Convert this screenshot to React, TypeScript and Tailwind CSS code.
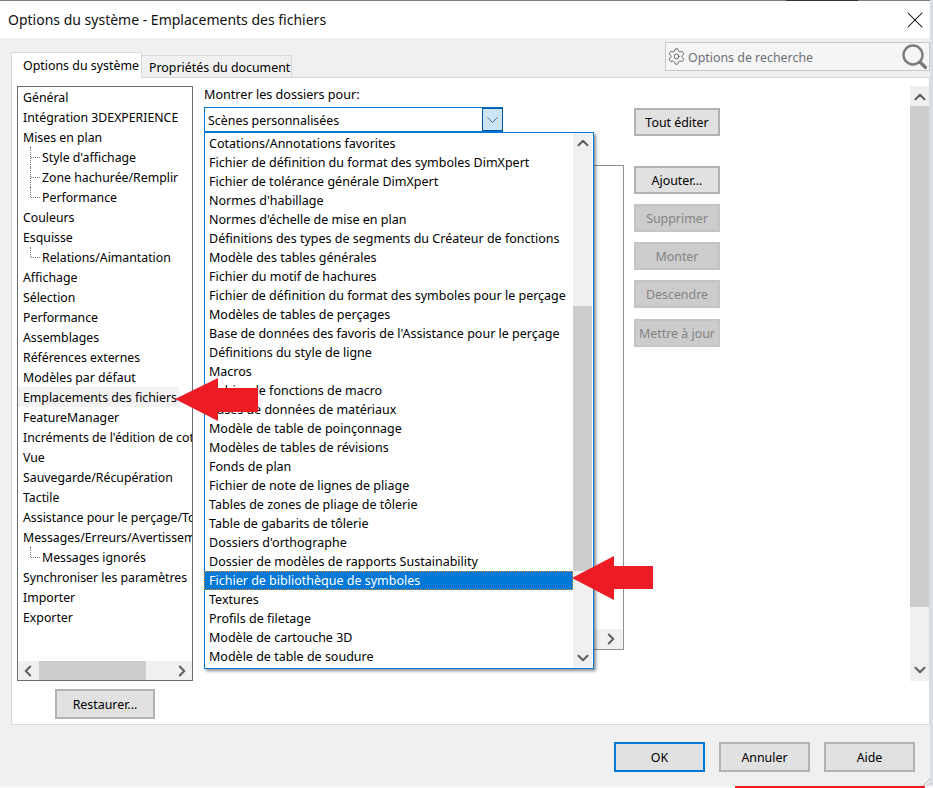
import { ChevronUp, ChevronDown, ChevronLeft, ChevronRight, Settings, X } from 'lucide-react'
import type { ReactNode } from 'react'

const treeItems: { label: string; child?: boolean; last?: boolean; selected?: boolean }[] = [
  { label: 'Général' },
  { label: 'Intégration 3DEXPERIENCE' },
  { label: 'Mises en plan' },
  { label: "Style d'affichage", child: true },
  { label: 'Zone hachurée/Remplir', child: true },
  { label: 'Performance', child: true, last: true },
  { label: 'Couleurs' },
  { label: 'Esquisse' },
  { label: 'Relations/Aimantation', child: true, last: true },
  { label: 'Affichage' },
  { label: 'Sélection' },
  { label: 'Performance' },
  { label: 'Assemblages' },
  { label: 'Références externes' },
  { label: 'Modèles par défaut' },
  { label: 'Emplacements des fichiers', selected: true },
  { label: 'FeatureManager' },
  { label: "Incréments de l'édition de cotes" },
  { label: 'Vue' },
  { label: 'Sauvegarde/Récupération' },
  { label: 'Tactile' },
  { label: 'Assistance pour le perçage/Toolbox' },
  { label: 'Messages/Erreurs/Avertissements' },
  { label: 'Messages ignorés', child: true, last: true },
  { label: 'Synchroniser les paramètres' },
  { label: 'Importer' },
  { label: 'Exporter' },
]

const menuItems = [
  'Cotations/Annotations favorites',
  'Fichier de définition du format des symboles DimXpert',
  'Fichier de tolérance générale DimXpert',
  "Normes d'habillage",
  "Normes d'échelle de mise en plan",
  'Définitions des types de segments du Créateur de fonctions',
  'Modèle des tables générales',
  'Fichier du motif de hachures',
  'Fichier de définition du format des symboles pour le perçage',
  'Modèles de tables de perçages',
  "Base de données des favoris de l'Assistance pour le perçage",
  'Définitions du style de ligne',
  'Macros',
  'Fichier de fonctions de macro',
  'Bases de données de matériaux',
  'Modèle de table de poinçonnage',
  'Modèles de tables de révisions',
  'Fonds de plan',
  'Fichier de note de lignes de pliage',
  'Tables de zones de pliage de tôlerie',
  'Table de gabarits de tôlerie',
  "Dossiers d'orthographe",
  'Dossier de modèles de rapports Sustainability',
  'Fichier de bibliothèque de symboles',
  'Textures',
  'Profils de filetage',
  'Modèle de cartouche 3D',
  'Modèle de table de soudure',
]

function DialogButton({ children, disabled, className = '' }: { children: ReactNode; disabled?: boolean; className?: string }) {
  return (
    <div
      className={`flex items-center justify-center border-2 pt-[2px] ${
        disabled ? 'bg-[#cccccc] border-[#c4c4c4] text-[#838383]' : 'bg-[#e1e1e1] border-[#b2b2b2] text-black'
      } ${className}`}
    >
      {children}
    </div>
  )
}

function RedArrow({ className, width, height, points }: { className: string; width: number; height: number; points: string }) {
  return (
    <svg className={`absolute ${className}`} width={width} height={height} viewBox={`0 0 ${width} ${height}`}>
      <polygon points={points} fill="#ed1c24" />
    </svg>
  )
}

function TreeRow({ label, child, last, selected }: { label: string; child?: boolean; last?: boolean; selected?: boolean }) {
  return (
    <div className="relative h-5 flex items-center whitespace-nowrap pt-[2px]">
      {child && (
        <>
          <div className={`absolute left-[12px] top-0 border-l border-dotted border-[#777777] ${last ? 'h-[10px]' : 'h-5'}`} />
          <div className="absolute left-[13px] top-[10px] w-[9px] border-t border-dotted border-[#777777]" />
        </>
      )}
      <span className={`${child ? 'ml-[24px]' : 'ml-[5px]'}`}>{label}</span>
      {selected && <div className="absolute left-0 top-0 h-5 w-[161px] bg-black/5" />}
    </div>
  )
}

export default function App() {
  return (
    <div className="w-[933px] h-[788px] flex flex-col overflow-hidden bg-[#f0f0f0] font-['Noto_Sans',sans-serif] text-[12.4px] text-black relative">
      {/* title bar */}
      <div className="h-[38px] shrink-0 bg-white border-t border-[#808080] mr-[3px] flex items-center justify-between pl-2 pr-px">
        <span className="text-[14px] text-[#111111]">Options du système - Emplacements des fichiers</span>
        <X size={28} strokeWidth={0.9} className="text-black" />
      </div>

      {/* tabs and search */}
      <div className="h-[39px] shrink-0 mr-[3px] flex items-end pl-[11px] relative">
        <div className="h-[26px] w-[131px] bg-white border border-b-0 border-[#d9d9d9] flex items-center pl-[11px] pt-[2px] -mb-px relative z-10">
          Options du système
        </div>
        <div className="h-[22px] w-[150px] bg-[#f0f0f0] border border-l-0 border-b-0 border-[#d9d9d9] flex items-center pl-[7px] pt-[4px]">
          Propriétés du document
        </div>
        <div className="ml-auto self-start mt-[4px] h-[29px] w-[265px] bg-[#f5f5f5] border border-[#c8c8c8] flex items-center pl-px text-[#6e7079]">
          <Settings size={19} strokeWidth={1} className="text-[#444444]" />
          <span className="ml-[2px] pt-[4px]">Options de recherche</span>
          <svg className="ml-auto mr-[2px]" width="25" height="25" viewBox="0 0 25 25" fill="none" stroke="#7b7b7b">
            <circle cx="11" cy="11" r="9.5" strokeWidth="2.4" />
            <path d="M18 18 L23.5 23.5" strokeWidth="3.4" strokeLinecap="round" />
          </svg>
        </div>
      </div>

      {/* main panel */}
      <div className="h-[648px] shrink-0 ml-[11px] mr-[3px] bg-white border border-[#d9d9d9] flex pt-2 pl-[5px] relative">
        {/* left column */}
        <div className="w-[176px] shrink-0 flex flex-col items-center">
          <div className="w-full h-[595px] border border-[#6d6d6d] flex flex-col overflow-hidden text-[12.3px]">
            <div className="h-[574px] overflow-hidden">
              {treeItems.map((item) => (
                <TreeRow key={item.label + (item.child ? 'c' : '')} {...item} />
              ))}
            </div>
            <div className="h-[19px] shrink-0 bg-[#f0f0f0] flex items-center justify-between relative">
              <ChevronLeft size={18} strokeWidth={2.8} className="ml-px text-[#606060]" />
              <div className="absolute left-[21px] top-0 h-[19px] w-[107px] bg-[#cdcdcd]" />
              <ChevronRight size={18} strokeWidth={2.8} className="mr-px text-[#606060]" />
            </div>
          </div>
          <DialogButton className="mt-2 w-[100px] h-[30px]">Restaurer...</DialogButton>
        </div>

        {/* folder column */}
        <div className="ml-[11px] w-[420px] shrink-0 relative">
          <div className="h-[19px] flex items-center text-[12.6px]">Montrer les dossiers pour:</div>
          <div className="mt-[2px] w-[299px] h-[25px] border border-[#0078d7] flex items-center">
            <span className="pl-[3px] pt-[4px]">Scènes personnalisées</span>
            <div className="ml-auto w-[21px] h-full bg-[#cce4f7] border border-[#005499] -mr-px flex items-center justify-center">
              <ChevronDown size={20} strokeWidth={0.8} className="text-[#222222]" />
            </div>
          </div>
          <div className="mt-[33px] h-[485px] border border-[#8f8f9d] flex flex-col justify-end items-end">
            <div className="h-[20px] w-[30px] bg-[#f0f0f0] flex items-center justify-end">
              <ChevronRight size={18} strokeWidth={2.8} className="mr-[3px] text-[#606060]" />
            </div>
          </div>

          {/* open dropdown */}
          <div className="absolute left-0 top-[46px] w-[390px] h-[537px] bg-white border border-[#0078d7] shadow-[2px_2px_3px_rgba(0,0,0,0.45)] flex text-[12.5px]">
            <div className="flex-1 pt-[1px] min-w-0">
              {menuItems.map((item, i) =>
                i === 23 ? (
                  <div key={item} className="h-[19px] flex items-center pl-[3px] pt-[2px] -ml-px bg-[#0078d7] text-white border border-dotted border-[#e08a2c]">
                    <span className="ml-px">{item}</span>
                  </div>
                ) : (
                  <div key={item} className="h-[19px] flex items-center pl-1 pt-[2px] whitespace-nowrap">
                    {item}
                  </div>
                ),
              )}
            </div>
            <div className="w-[19px] mr-px shrink-0 bg-[#f0f0f0] flex flex-col items-center justify-between relative">
              <ChevronUp size={18} strokeWidth={2.8} className="mt-px text-[#606060] relative z-10" />
              <div className="absolute left-0 top-[173px] w-[19px] h-[265px] bg-[#cdcdcd]" />
              <ChevronDown size={18} strokeWidth={2.8} className="mb-px text-[#606060]" />
            </div>
          </div>
        </div>

        {/* action buttons */}
        <div className="ml-[10px] w-[86px] shrink-0 flex flex-col">
          <DialogButton className="mt-[22px] h-[28px]">Tout éditer</DialogButton>
          <DialogButton className="mt-[30px] h-[28px]">Ajouter...</DialogButton>
          <DialogButton disabled className="mt-[10px] h-[28px]">Supprimer</DialogButton>
          <DialogButton disabled className="mt-[10px] h-[28px]">Monter</DialogButton>
          <DialogButton disabled className="mt-[10px] h-[28px]">Descendre</DialogButton>
          <DialogButton disabled className="mt-[11px] h-[28px]">Mettre à jour</DialogButton>
        </div>

        {/* page scrollbar */}
        <div className="ml-auto w-[19px] h-[595px] shrink-0 bg-[#f0f0f0] flex flex-col items-center justify-between relative">
          <ChevronUp size={18} strokeWidth={2.8} className="mt-[2px] text-[#606060]" />
          <div className="absolute left-0 top-[20px] w-[19px] h-[501px] bg-[#cdcdcd]" />
          <ChevronDown size={18} strokeWidth={2.8} className="mb-[2px] text-[#606060]" />
        </div>
      </div>

      {/* footer */}
      <div className="flex-1 mr-[3px] flex justify-end gap-[14px] pt-[17px] pr-[15px]">
        <DialogButton className="w-[91px] h-[30px] !border-[#0078d7]">OK</DialogButton>
        <DialogButton className="w-[91px] h-[30px]">Annuler</DialogButton>
        <DialogButton className="w-[91px] h-[30px]">Aide</DialogButton>
      </div>

      {/* window edge */}
      <div className="absolute right-0 top-0 w-[3px] h-full bg-[#d8dde8]" />
      <div className="absolute left-0 bottom-0 w-full h-[2px] bg-[#f8f8f8]" />
      <div className="absolute left-[735px] bottom-0 w-[190px] h-[2px] bg-[#ed1c24]" />
      <div className="absolute left-[786px] top-0 w-[72px] h-px bg-[#333333]" />
      <svg className="absolute left-[923px] top-[779px]" width="7" height="7" viewBox="0 0 7 7" stroke="#b0b0b0">
        <path d="M0 7 L7 0 M4 7 L7 4" />
      </svg>

      {/* annotation arrows */}
      <RedArrow className="left-[175px] top-[378px]" width={84} height={43} points="0,21 43,0 43,10 83,10 83,34 43,34 43,43" />
      <RedArrow className="left-[572px] top-[556px]" width={82} height={44} points="0,22 42,0 42,10 81,10 81,33 42,33 42,44" />
    </div>
  )
}
